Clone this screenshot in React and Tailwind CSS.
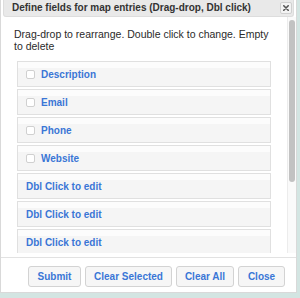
const fields = [
    { label: 'Description', check: true },
    { label: 'Email', check: true },
    { label: 'Phone', check: true },
    { label: 'Website', check: true },
    { label: 'Dbl Click to edit', check: false },
    { label: 'Dbl Click to edit', check: false },
    { label: 'Dbl Click to edit', check: false },
];

const buttons = [
    { label: 'Submit', w: 'w-[53px]' },
    { label: 'Clear Selected', w: 'w-[87px]' },
    { label: 'Clear All', w: 'w-[58px]' },
    { label: 'Close', w: 'w-[47px]' },
];

const App = () => {
    return (
        <div className="w-[300px] h-[298px] bg-[#d3e5e2] overflow-hidden font-['Liberation_Sans',Arial,sans-serif]">
            <div className="w-[297px] h-[293px] bg-white border-x border-b border-[#d9d9d9] flex flex-col">
                {/* title bar */}
                <div className="mx-[2px] h-[17px] shrink-0 bg-[#e9e9e9] border-x border-b border-[#dddddd] rounded-b-[3px] flex items-center justify-between pl-[8px] pr-[1px]">
                    <span className="text-[10px] leading-[12px] font-bold text-[#333333]">
                        Define fields for map entries (Drag-drop, Dbl click)
                    </span>
                    <button className="w-[12px] h-[12px] mb-[1px] bg-[#f3f3f3] border border-[#d0d0d0] rounded-[2px] flex items-center justify-center">
                        <svg width="6" height="6" viewBox="0 0 6 6">
                            <path d="M0.8 0.8 L5.2 5.2 M5.2 0.8 L0.8 5.2" stroke="#555" strokeWidth="1.6" strokeLinecap="round" />
                        </svg>
                    </button>
                </div>

                {/* scroll area */}
                <div className="h-[236px] shrink-0 flex">
                    <div className="flex-1 overflow-hidden pl-[13px] pt-[11px]">
                        <p className="w-[262px] text-[10.5px] leading-[12px] text-[#2a2a2a]">
                            Drag-drop to rearrange. Double click to change. Empty to delete
                        </p>
                        <div className="mt-[9px] ml-[3px] w-[254px] flex flex-col gap-[2px]">
                            {fields.map((f, i) => (
                                <div
                                    key={i}
                                    className="h-[26px] shrink-0 border border-[#e0e0e0] bg-[linear-gradient(#fcfcfc_0,#fcfcfc_6px,#f5f5f5_6px)] flex items-center gap-[6px] pl-[8px]"
                                >
                                    {f.check && (
                                        <span className="w-[9px] h-[9px] bg-white border border-[#d0d0d0] rounded-[2px]" />
                                    )}
                                    <span className="text-[10px] font-bold text-[#3a76d6]">{f.label}</span>
                                </div>
                            ))}
                        </div>
                    </div>
                    <div className="w-[9px] border-l border-[#ececec] bg-[#fafafa] pt-[3px] flex justify-center">
                        <div className="w-[6px] h-[162px] rounded-full bg-[#c2c2c2]" />
                    </div>
                </div>

                {/* button pane */}
                <div className="mt-[4px] border-t border-[#e2e2e2] flex justify-end gap-[4px] pt-[8px] pr-[11px]">
                    {buttons.map(b => (
                        <button
                            key={b.label}
                            className={`${b.w} h-[21px] whitespace-nowrap leading-none bg-[#f6f6f6] border border-[#d3d3d3] rounded-[3px] text-[10px] font-bold text-[#3a76d6] flex items-center justify-center`}
                        >
                            {b.label}
                        </button>
                    ))}
                </div>
            </div>
        </div>
    );
};

export default App;
